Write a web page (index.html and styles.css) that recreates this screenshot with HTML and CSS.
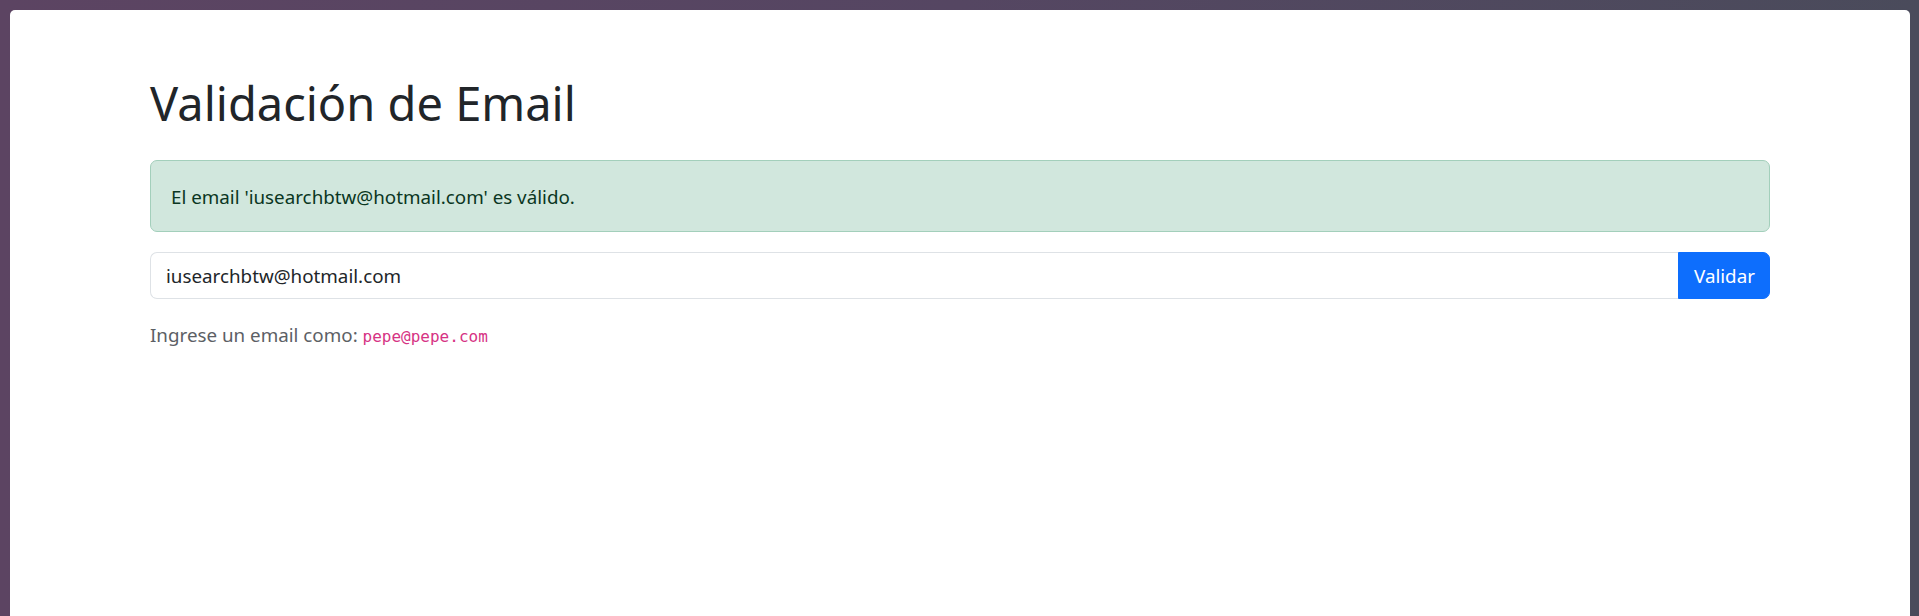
FILE: index.html
```html
<!DOCTYPE html>
<html lang="es">
<head>
<meta charset="utf-8">
<title>Validación de Email</title>
<link rel="stylesheet" href="styles.css">
</head>
<body>
<div class="window">
  <main class="container">
    <h1 class="title">Validación de Email</h1>
    <div class="alert">El email 'iusearchbtw@hotmail.com' es válido.</div>
    <form class="input-group" onsubmit="return false;">
      <input class="field" type="text" value="iusearchbtw@hotmail.com">
      <button class="btn" type="submit">Validar</button>
    </form>
    <p class="help">Ingrese un email como: <code class="code">pepe@pepe.com</code></p>
  </main>
</div>
</body>
</html>
```

FILE: styles.css
```css
html, body {
  margin: 0;
  padding: 0;
  height: 100%;
}
body {
  background: linear-gradient(90deg, #5c4462 0%, #554662 50%, #4a4b5b 100%);
  font-family: "Noto Sans", "Open Sans", sans-serif;
  color: #212529;
  overflow: hidden;
  padding: 10px 9px 0 10px;
  box-sizing: border-box;
}
.window {
  background: #fff;
  height: 100%;
  border-radius: 5px 5px 0 0;
  display: flex;
  justify-content: center;
}
.container {
  width: 1620px;
  padding-top: 63px;
}
.title {
  margin: 0 0 27px 0;
  font-size: 47px;
  font-weight: 400;
  line-height: 60px;
}
.alert {
  background: #d1e7dd;
  border: 1px solid #a3cfbb;
  color: #0a3622;
  border-radius: 7px;
  padding: 21px 20px 19px;
  font-size: 18.8px;
  line-height: 30px;
  margin-bottom: 20px;
}
.input-group {
  display: flex;
  height: 47px;
  margin: 0;
}
.field {
  flex: 1;
  border: 1px solid #dee2e6;
  border-right: none;
  border-radius: 7px 0 0 7px;
  padding: 0 15px;
  font: inherit;
  font-size: 18.8px;
  color: #212529;
  outline: none;
}
.btn {
  border: 1px solid #0d6efd;
  background: #0d6efd;
  color: #fff;
  border-radius: 0 7px 7px 0;
  padding: 0 15px;
  font: inherit;
  font-size: 18.8px;
  width: 92px;
}
.help {
  margin: 21px 0 0 0;
  font-size: 18.8px;
  line-height: 30px;
  color: #5c6065;
}
.code {
  font-family: "DejaVu Sans Mono", "Liberation Mono", monospace;
  font-size: 16px;
  color: #d63384;
}
```
